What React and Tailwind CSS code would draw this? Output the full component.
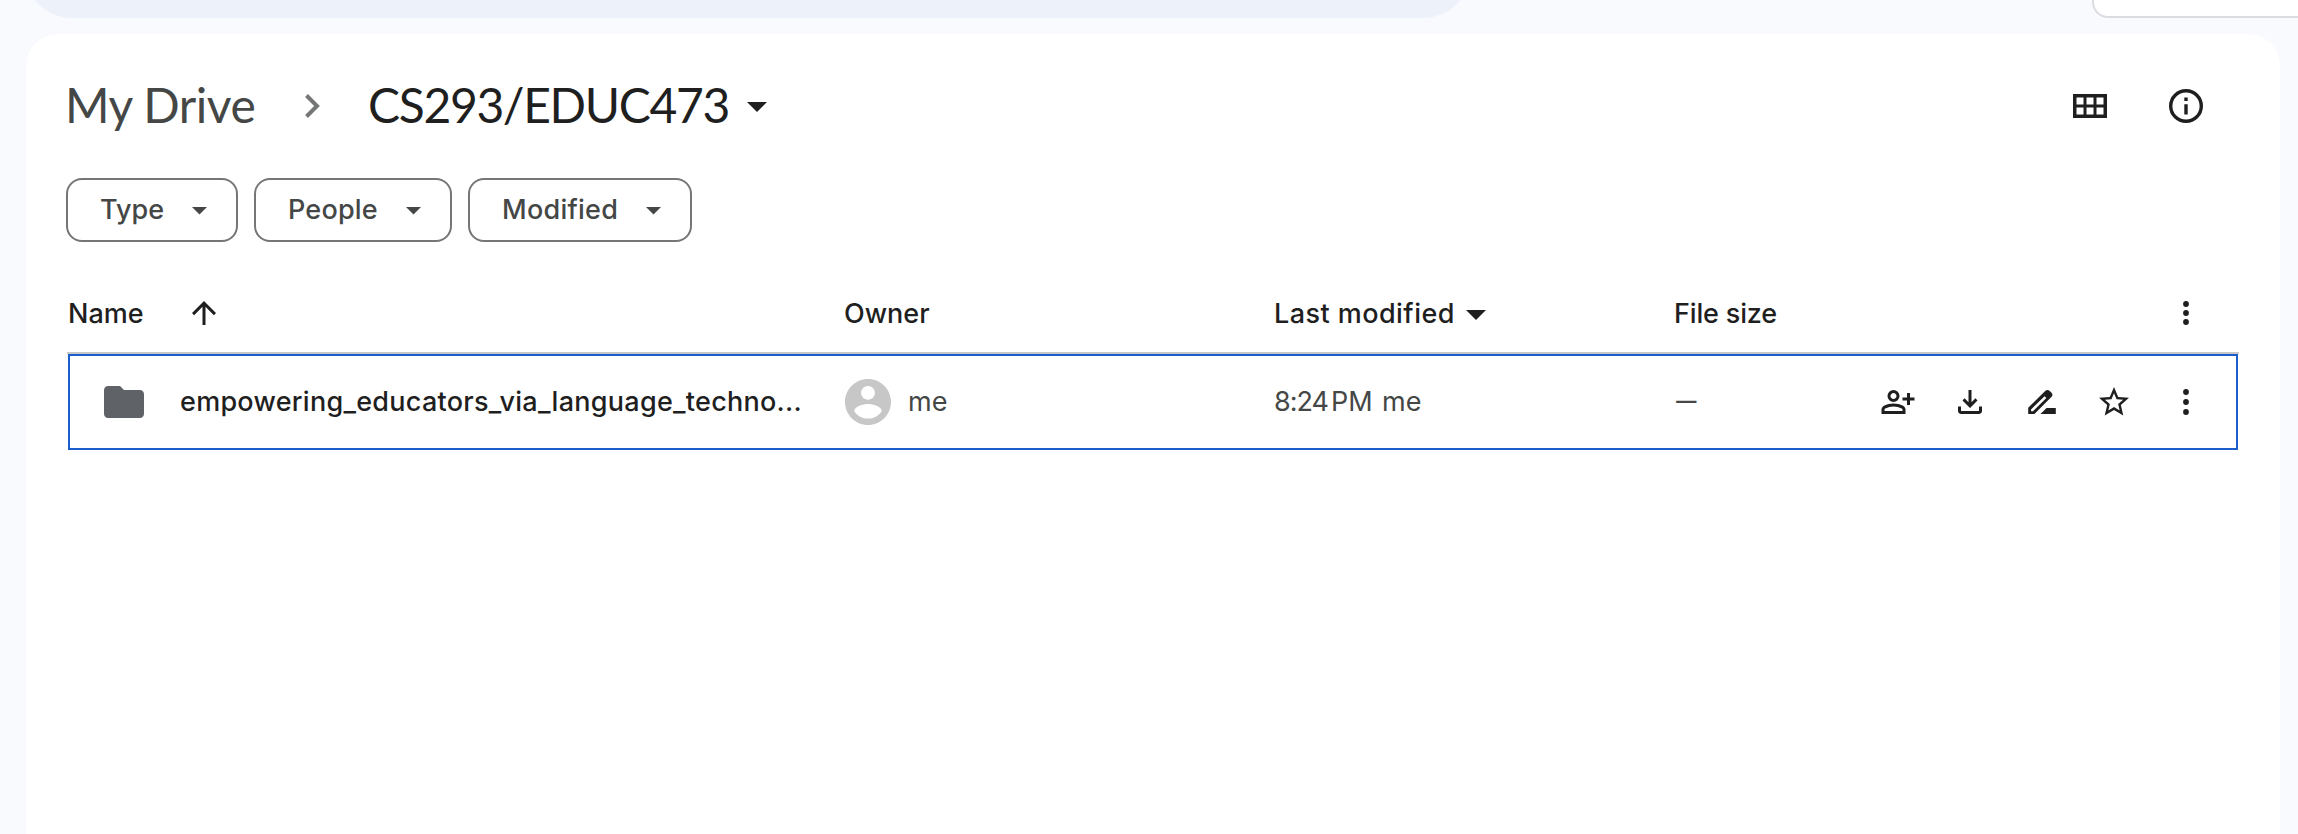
import React from "react";

const GRID = "grid grid-cols-[777px_430px_400px_1fr] items-center";

function Caret({ className }) {
  return (
    <svg viewBox="0 0 20 10" className={className} fill="currentColor" aria-hidden="true">
      <path d="M0 0h20L10 10z" />
    </svg>
  );
}

function Icon({ d, size = "size-9" }) {
  return (
    <svg viewBox="0 0 24 24" className={`${size} shrink-0`} fill="currentColor" aria-hidden="true">
      <path fillRule="evenodd" d={d} />
    </svg>
  );
}

const ICONS = {
  share:
    "M18 14v-3h-3V9h3V6h2v3h3v2h-3v3zm-9-2q-1.65 0-2.825-1.175T5 8t1.175-2.825T9 4t2.825 1.175T13 8t-1.175 2.825T9 12m-8 8v-2.8q0-.85.438-1.562T2.6 14.55q1.55-.775 3.15-1.162T9 13t3.25.388t3.15 1.162q.725.375 1.163 1.088T17 17.2V20zm2-2h12v-.8q0-.275-.137-.5t-.363-.35q-1.35-.675-2.725-1.012T9 15t-2.775.338T3.5 16.35q-.225.125-.363.35T3 17.2zm6-8q.825 0 1.413-.587T11 8t-.587-1.412T9 6t-1.412.588T7 8t.588 1.413T9 10",
  download:
    "m12 16-5-5 1.4-1.45 2.6 2.6V4h2v8.15l2.6-2.6L17 11zm-6 4q-.825 0-1.412-.587T4 18v-3h2v3h12v-3h2v3q0 .825-.587 1.413T18 20z",
  rename:
    "m15 16-4 4h10.2v-4zM2.8 20v-4.2L14.3 4.5q.6-.55 1.35-.55t1.3.55l1.4 1.4q.6.6.6 1.35t-.55 1.3L6.95 20zM4.7 18.2h1.3l8.9-8.9-1.2-1.2-9 8.9z",
  star: "M22 9.24l-7.19-.62L12 2 9.19 8.63 2 9.24l5.46 4.73L5.82 21 12 17.27 18.18 21l-1.63-7.03L22 9.24zM12 15.4l-3.76 2.27 1-4.28-3.32-2.88 4.38-.38L12 6.1l1.71 4.04 4.38.38-3.32 2.88 1 4.28L12 15.4z",
  folder:
    "M10 4H4c-1.1 0-1.99.9-1.99 2L2 18c0 1.1.9 2 2 2h16c1.1 0 2-.9 2-2V8c0-1.1-.9-2-2-2h-8l-2-2z",
  arrowUp: "M11 20V7.825l-5.6 5.6L4 12l8-8 8 8-1.4 1.425-5.6-5.6V20z",
};

function More({ gap }) {
  return (
    <svg viewBox="0 0 36 36" className="size-9 shrink-0" fill="currentColor" aria-hidden="true">
      <circle cx="18" cy={18 - gap} r="2.9" />
      <circle cx="18" cy="18" r="2.9" />
      <circle cx="18" cy={18 + gap} r="2.9" />
    </svg>
  );
}

function Chip({ label, className }) {
  return (
    <button
      className={`flex h-16 items-center justify-between rounded-2xl border-2 border-[#747775] pr-[29px] text-[#444746] ${className}`}
    >
      <span>{label}</span>
      <Caret className="mt-[2px] h-[7.5px] w-[15px]" />
    </button>
  );
}

export default function App() {
  return (
    <div className="h-[834px] w-[2298px] overflow-hidden bg-[#f8fafd] font-['Inter','Liberation_Sans',sans-serif] text-[27px] leading-9 font-medium text-[#1f1f1f]">
      <div className="flex h-[34px] items-start overflow-hidden">
        <div className="-mt-[78px] ml-6 h-24 w-[1447px] shrink-0 rounded-full bg-[#edf2fa]" />
        <div className="-mt-[78px] ml-[621px] h-24 w-[260px] shrink-0 rounded-2xl border-2 border-[#dadce0] bg-white" />
      </div>

      <main className="ml-[26px] h-[800px] w-[2254px] rounded-t-[32px] bg-white">
        <div className="flex h-36 items-center pr-[77px] pl-[39px]">
          <nav className="flex flex-1 items-center font-['Lato',sans-serif] text-[48px] leading-[60px] font-normal">
            <span className="w-[240px] pb-[3px] tracking-[-0.5px] whitespace-nowrap text-[#444746]">My Drive</span>
            <svg viewBox="0 0 16 24" className="h-6 w-4" fill="none" stroke="#747775" strokeWidth="4" aria-hidden="true">
              <path d="M1.5 1.5 12 12 1.5 22.5" />
            </svg>
            <span className="ml-[47px] w-[379px] pb-[3px] tracking-[-1.35px] whitespace-nowrap">CS293/EDUC473</span>
            <Caret className="mt-[2px] h-[10px] w-[20px]" />
          </nav>
          <div className="flex items-center gap-[62px]">
            <svg viewBox="0 0 34 24" className="h-6 w-[34px]" fill="currentColor" aria-hidden="true">
              <path
                fillRule="evenodd"
                d="M0 0h34v24H0zM3.5 3.5v7h7v-7zM13.5 3.5v7h7v-7zM23.5 3.5v7h7v-7zM3.5 13.5v7h7v-7zM13.5 13.5v7h7v-7zM23.5 13.5v7h7v-7z"
              />
            </svg>
            <svg viewBox="0 0 34 34" className="size-[34px]" fill="currentColor" aria-hidden="true">
              <circle cx="17" cy="17" r="15.3" fill="none" stroke="currentColor" strokeWidth="3.4" />
              <path d="M15.3 8.6h3.4V12h-3.4zM15.3 15.2h3.4v10.2h-3.4z" />
            </svg>
          </div>
        </div>

        <div className="flex gap-4 pl-10">
          <Chip label="Type" className="w-[172px] pl-[32px]" />
          <Chip label="People" className="w-[198px] pl-[32px] tracking-[0.2px]" />
          <Chip label="Modified" className="w-[224px] pl-[32px] tracking-[0.25px]" />
        </div>

        <section className="mx-[41px] mt-8">
          <div className={`${GRID} h-20 border-b-2 border-[#c7c7c7]`}>
            <div className="flex items-center pl-[1px]">
              <span className="w-[118px] pt-[2px]">Name</span>
              <Icon d={ICONS.arrowUp} />
            </div>
            <div className="pt-[2px]">Owner</div>
            <div className="flex items-center">
              <span className="w-[192px] pt-[2px] tracking-[0.45px] whitespace-nowrap">Last modified</span>
              <Caret className="mt-[3px] h-[10px] w-[20px]" />
            </div>
            <div className="flex items-center justify-between pr-[35px]">
              <span className="pt-[2px] tracking-[-0.15px]">File size</span>
              <More gap={9} />
            </div>
          </div>

          <div className="relative mx-[1px] h-24 outline-2 -outline-offset-2 outline-[#1b5dcb]">
            <div className={`${GRID} -mx-[1px] h-full`}>
              <div className="flex items-center pl-[33px]">
                <span className="text-[#5f6368]">
                  <Icon d={ICONS.folder} size="size-12" />
                </span>
                <span className="ml-8 tracking-[0.27px] whitespace-nowrap">
                  empowering_educators_via_language_techno...
                </span>
              </div>
              <div className="flex items-center pl-[1px] font-normal text-[#444746]">
                <svg viewBox="2 2 20 20" className="size-[46px]" fill="#c7c7c7" aria-hidden="true">
                  <path d="M12 2C6.48 2 2 6.48 2 12s4.48 10 10 10 10-4.48 10-10S17.52 2 12 2zm0 3c1.66 0 3 1.34 3 3s-1.34 3-3 3-3-1.34-3-3 1.34-3 3-3zm0 14.2c-2.5 0-4.71-1.28-6-3.22.03-1.99 4-3.08 6-3.08 1.99 0 5.97 1.09 6 3.08-1.29 1.94-3.5 3.22-6 3.22z" />
                </svg>
                <span className="ml-[17px]">me</span>
              </div>
              <div className="flex items-center font-normal text-[#444746]">
                <span className="w-[57px] tracking-[-1px]">8:24</span>
                <span className="w-[51px]">PM</span>
                <span>me</span>
              </div>
              <div className="flex items-center justify-between pr-[35px]">
                <span className="pt-[1px] font-['Roboto',sans-serif] text-[31px] font-normal text-[#444746]">—</span>
                <div className="flex gap-9">
                  <Icon d={ICONS.share} />
                  <Icon d={ICONS.download} />
                  <Icon d={ICONS.rename} />
                  <Icon d={ICONS.star} />
                  <More gap={10} />
                </div>
              </div>
            </div>
          </div>
        </section>
      </main>
    </div>
  );
}
